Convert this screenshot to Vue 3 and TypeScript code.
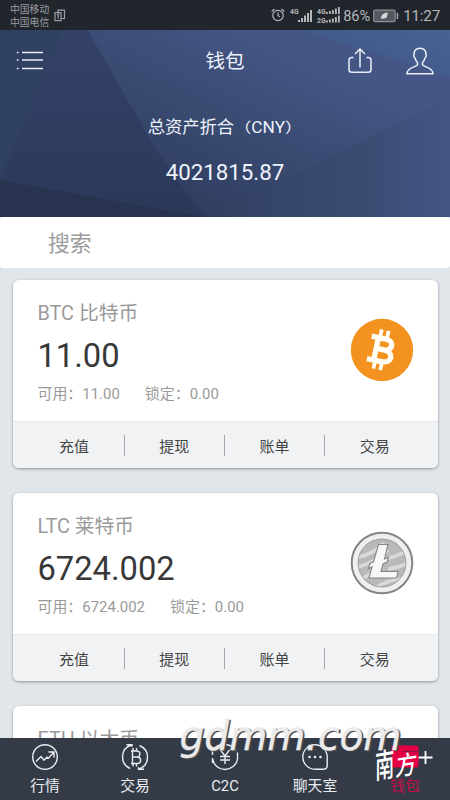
<script setup lang="ts">
interface Coin {
  code: string
  name: string
  total?: string
  available?: string
  locked?: string
}

const coins: Coin[] = [
  { code: 'BTC', name: '比特币', total: '11.00', available: '11.00', locked: '0.00' },
  { code: 'LTC', name: '莱特币', total: '6724.002', available: '6724.002', locked: '0.00' },
  { code: 'ETH', name: '以太币' },
]

const actions: string[] = ['充值', '提现', '账单', '交易']
</script>

<template>
  <div class="screen">
    <div class="status">
      <div class="carriers">
        <span>中国移动</span>
        <span>中国电信</span>
      </div>
      <svg class="sim" width="12" height="13" viewBox="0 0 12 13" fill="none" stroke="#9a9da2" stroke-width="1.2">
        <path d="M1 3.6h6v8H1zM4 3V1.2h6.500V9.500H7.500" />
        <path d="M3 6l1.200-.8v4.500" />
      </svg>
      <div class="spacer"></div>
      <svg class="alarm" width="14" height="14" viewBox="0 0 14 14" fill="none" stroke="#b4b6ba" stroke-width="1.200">
        <circle cx="7" cy="7.500" r="5.200" />
        <path d="M7 4.500v3.200l2 1M.7 3.500L3.500 1M13.300 3.500L10.500 1" />
      </svg>
      <svg class="signals" width="54" height="18" viewBox="0 0 54 18" fill="#b4b6ba">
        <text x="0" y="7.500" class="tiny">4G</text>
        <path d="M8 14h2v2H8zM11 12h2v4h-2zM14 9.500h2V16h-2zM17 7h2v9h-2zM20 4h2v12h-2z" />
        <text x="27" y="8" class="tiny">4G</text>
        <text x="27" y="16.500" class="tiny">2G</text>
        <path d="M36 6h1.800v2H36zM39 5h1.800v3H39zM42 4h1.800v4H42zM45 2.500h1.800V8H45zM48 1h1.800v7H48z" />
        <path d="M36 14.500h1.800v2H36zM39 13.500h1.800v3H39zM42 12.500h1.800v4H42zM45 11h1.800v5.500H45zM48 9.500h1.800v7H48z" />
      </svg>
      <span class="percent">86%</span>
      <svg class="battery" width="26" height="14" viewBox="0 0 26 14" fill="none">
        <rect x=".7" y="1.200" width="21.500" height="11.500" rx="1.500" fill="#54585e" stroke="#8d9096" stroke-width="1.200" />
        <path d="M24.500 4v6" stroke="#a4a6aa" stroke-width="1.500" />
        <path d="M8 10c0-4 2-6 6.500-6.500C15 8 13 10.500 9 9.500z" fill="#d2d4d6" />
      </svg>
      <span class="clock">11:27</span>
    </div>

    <header class="hero">
      <svg class="facets" width="450" height="187" viewBox="0 0 450 187" preserveAspectRatio="none">
        <defs>
          <linearGradient id="base" x1="0" y1="1" x2="1" y2="0">
            <stop offset="0" stop-color="#2a3553" />
            <stop offset=".5" stop-color="#3b4d74" />
            <stop offset="1" stop-color="#476294" />
          </linearGradient>
          <linearGradient id="left" x1="0" y1="0" x2="0" y2="1">
            <stop offset="0" stop-color="#34426a" />
            <stop offset="1" stop-color="#2b3858" />
          </linearGradient>
          <linearGradient id="mid" gradientUnits="userSpaceOnUse" x1="165" y1="187" x2="255" y2="0">
            <stop offset="0" stop-color="#2d3a5c" />
            <stop offset=".5" stop-color="#394a70" />
            <stop offset="1" stop-color="#445685" />
          </linearGradient>
          <linearGradient id="right" x1="0" y1="0" x2="1" y2="0">
            <stop offset="0" stop-color="#303e60" />
            <stop offset=".3" stop-color="#36466a" />
            <stop offset=".65" stop-color="#3b4c72" />
            <stop offset="1" stop-color="#425585" />
          </linearGradient>
        </defs>
        <rect width="450" height="187" fill="url(#base)" />
        <path d="M0 0H64L0 150z" fill="#304061" />
        <path d="M64 0H88L155 118 205 187H0V150z" fill="url(#left)" />
        <path d="M88 0H300L450 47V68L300 142 205 187 155 118z" fill="url(#mid)" />
        <path d="M300 0L450 47V68L435 74 305 0z" fill="#46598a" opacity=".25" />
        <path d="M450 68L300 142 205 187H450z" fill="url(#right)" />
        <path d="M0 150L120 172 205 187H0z" fill="#28334f" />
      </svg>
      <div class="titlebar">
        <svg width="28" height="22" viewBox="0 0 28 22" fill="none" stroke="#e9eef8" stroke-width="1.500">
          <path d="M6 2.500h21M6 10h21M6 18.500h21M.8 2.500h1.800M.8 10h1.800M.8 18.500h1.800" />
        </svg>
        <h1>钱包</h1>
        <div class="tools">
          <svg width="24" height="26" viewBox="0 0 24 26" fill="none" stroke="#e9eef8" stroke-width="1.500">
            <path d="M5.500 9.500H3.800Q1 9.500 1 12.300v9.200Q1 24.300 3.800 24.300h16.400q2.800 0 2.800-2.800v-9.200q0-2.800-2.800-2.800h-1.700M12 19.500V1.500M7 6l5-5 5 5" />
          </svg>
          <svg width="28" height="28" viewBox="0 0 28 28" fill="none" stroke="#e9eef8" stroke-width="1.500">
            <path d="M14 1.200c-4.200 0-6.200 2.800-5.900 6.300-.9 1 .1 3.200 1 3.700.4 2 1.200 3.300 2.400 4.300v2.200C10.500 20.300 1 20 1 26.700h26c0-6.700-9.500-6.400-10.500-9v-2.200c1.200-1 2-2.300 2.400-4.300.9-.5 1.900-2.700 1-3.700.3-3.500-1.700-6.300-5.900-6.300z" />
          </svg>
        </div>
      </div>
      <p class="caption">总资产折合<span class="paren">（</span>CNY<span class="paren">）</span></p>
      <p class="sum">4021815.87</p>
    </header>

    <div class="search">搜索</div>

    <main class="list">
      <section v-for="coin in coins" :key="coin.code" class="card">
        <div class="body">
          <div class="info">
            <h2>{{ coin.code }} {{ coin.name }}</h2>
            <template v-if="coin.total">
              <div class="total">{{ coin.total }}</div>
              <div class="detail">
                <span>可用：{{ coin.available }}</span>
                <span>锁定：{{ coin.locked }}</span>
              </div>
            </template>
          </div>
          <svg v-if="coin.code === 'BTC'" class="logo" viewBox="0 0 64 64">
            <circle cx="32" cy="32" r="31.200" fill="#f4921f" />
            <g transform="rotate(12 32 32)" fill="none" stroke="#fffdf4">
              <path d="M19 20.500H33.500c9.500 0 9.500 11 0 11H27M33.500 31.500c11.500 0 11.500 12 0 12H19M26 20.500V43.500" stroke-width="5.400" />
              <path d="M27.500 12v8M34.500 12v8M27.500 44v8M34.500 44v8" stroke-width="3.800" />
            </g>
          </svg>
          <svg v-else-if="coin.code === 'LTC'" class="logo" viewBox="0 0 64 64">
            <defs>
              <clipPath id="disc"><circle cx="32" cy="32" r="23.500" /></clipPath>
            </defs>
            <circle cx="32" cy="32" r="30.300" fill="#efefef" stroke="#858585" stroke-width="2" />
            <circle cx="32" cy="32" r="23.800" fill="#b9b9b9" stroke="#a4a4a4" stroke-width="1.200" />
            <g clip-path="url(#disc)" fill="none" stroke="#dadada" stroke-width="3.500">
              <path d="M5 27Q22 24 34 12M5 37Q25 32 38 19M33 28Q45 27 60 18M8 49Q22 44 28 36M38 38Q49 37 60 31M22 59Q34 49 59 47" />
            </g>
            <path d="M28.500 13.500h9.500l-3.500 14.500 4-2-1.300 5-4.200 2-2 7.500h17l-1.500 6.500H19l3-11-3.500 1.500 1.300-5 3.700-1.700z" fill="#f7f7f7" stroke="#858585" stroke-width="1.100" />
          </svg>
        </div>
        <div v-if="coin.total" class="actions">
          <button v-for="action in actions" :key="action" type="button">{{ action }}</button>
        </div>
      </section>
    </main>

    <nav class="tabs">
      <div class="tab">
        <svg width="28" height="28" viewBox="0 0 28 28">
          <circle cx="14" cy="14" r="12.300" />
          <path d="M5 18.500l5-5 3 3.800 3-3.200 1.500 1L23 9M17.500 9H23v5.500" />
        </svg>
        <span>行情</span>
      </div>
      <div class="tab">
        <svg width="28" height="28" viewBox="0 0 28 28">
          <path d="M10 1.800H5.500M11 2Q1.500 4.500 1.500 14q0 8 7.500 11.500M6 1.800h5v2M18.500 2.500Q26.500 6 26.500 14q0 9-8.500 12M23 26.200h-5.500v-2" />
          <path d="M10 8h5.500c4.500 0 4.500 6 0 6H11.500M15.500 14c5.500 0 5.500 6.500 0 6.500H10M11.500 8v12.500M12 5v3M15.500 5v3M12 20.500v3M15.500 20.500v3" />
        </svg>
        <span>交易</span>
      </div>
      <div class="tab">
        <svg width="28" height="28" viewBox="0 0 28 28">
          <path d="M1.500 7.500Q5 1.500 14 1.500c5 0 9 3 11 6.500M1.500 7v5M1.800 16.500C3 22.500 8 26.500 14 26.500S25.500 22 26.500 16V9.500M1.500 15v5" />
          <path d="M9.500 7l4.500 6 4.500-6M14 13v8M9 13.500h10M9 17h10" />
        </svg>
        <span>C2C</span>
      </div>
      <div class="tab">
        <svg width="28" height="28" viewBox="0 0 28 28">
          <path d="M14 26.200A12.200 12.200 0 1 1 26.200 14v8.500q0 3.700-3.700 3.700z" />
          <g class="dots"><circle cx="8.500" cy="14" r="1.300" /><circle cx="14" cy="14" r="1.300" /><circle cx="19.500" cy="14" r="1.300" /></g>
        </svg>
        <span>聊天室</span>
      </div>
      <div class="tab active">
        <svg width="28" height="28" viewBox="0 0 28 28">
          <rect x=".5" y="2.500" width="27" height="22" rx="2" class="wallet" />
          <path d="M12 8.500h15" class="slot" />
        </svg>
        <span>钱包</span>
      </div>
    </nav>

    <svg class="stamp" width="450" height="100" viewBox="0 0 450 100">
      <g class="site">
        <text x="181" y="51" textLength="222" lengthAdjust="spacingAndGlyphs" fill="#4b4b4b">gdmm.com</text>
        <text x="179.500" y="49.500" textLength="222" lengthAdjust="spacingAndGlyphs" fill="#ebebeb">gdmm.com</text>
      </g>
      <g class="brush">
        <text transform="translate(375 79) rotate(-10) skewX(-10) scale(.68 1.120)">南</text>
        <text transform="translate(395 76) rotate(-8) skewX(-14) scale(.72 .88)">方</text>
      </g>
      <path d="M425.500 51v13M418.500 57.500h14" stroke="#fff" stroke-width="1.800" />
    </svg>
  </div>
</template>

<style>
body {
  margin: 0;
}
</style>

<style scoped>
.screen {
  position: relative;
  display: flex;
  flex-direction: column;
  width: 450px;
  height: 800px;
  overflow: hidden;
  background: #e1e6eb;
  font-family: Roboto, "Noto Sans CJK SC", sans-serif;
  font-weight: 400;
}

h1, h2, p {
  margin: 0;
  font-weight: 400;
}

.status {
  display: flex;
  align-items: center;
  flex: none;
  box-sizing: border-box;
  height: 30px;
  padding: 0 10px;
  background: #21252c;
  color: #b4b6ba;
}

.carriers {
  display: flex;
  flex-direction: column;
  padding-top: 2px;
  font-size: 9.8px;
  line-height: 13.500px;
  color: #9a9da2;
}

.sim {
  margin-left: 5px;
}

.spacer {
  flex: 1;
}

.alarm {
  margin-right: 5px;
}

.tiny {
  font-size: 6.800px;
  font-weight: 700;
}

.signals {
  margin-right: -1px;
}

.percent {
  width: 28px;
  padding-top: 1px;
  font-size: 14.600px;
  line-height: 30px;
  letter-spacing: -0.1px;
}

.battery {
  margin: 1px 4px 0 2px;
}

.clock {
  padding-top: 1px;
  font-size: 15.200px;
  line-height: 30px;
  letter-spacing: -0.2px;
}

.hero {
  position: relative;
  flex: none;
  height: 187px;
  color: #eef3fb;
  text-align: center;
}

.facets {
  position: absolute;
  inset: 0;
}

.titlebar {
  position: relative;
  display: grid;
  grid-template-columns: 1fr auto 1fr;
  align-items: center;
  height: 60px;
  padding: 1px 16px 0;
}

.titlebar h1 {
  padding-top: 2px;
  font-size: 19.500px;
  line-height: 58px;
}

.tools {
  display: flex;
  justify-content: flex-end;
  align-items: center;
  gap: 34px;
}

.caption {
  position: relative;
  padding-top: 22px;
  font-size: 17.300px;
  line-height: 28px;
}

.caption .paren {
  display: inline-block;
  transform: scaleY(0.82);
}

.sum {
  position: relative;
  padding-top: 16px;
  font-size: 22.300px;
  line-height: 30px;
}

.search {
  flex: none;
  box-sizing: border-box;
  height: 51px;
  padding: 1px 0 0 48px;
  border-radius: 3px;
  background: #fff;
  color: #9c9c9c;
  font-size: 21.800px;
  line-height: 51px;
}

.list {
  display: flex;
  flex: 1;
  flex-direction: column;
  gap: 25px;
  min-height: 0;
  padding: 12px 12.500px 0;
  overflow: hidden;
}

.card {
  flex: none;
  height: 188px;
  overflow: hidden;
  border-radius: 6px;
  background: #fff;
  box-shadow: 0 1px 3px rgba(70, 80, 90, 0.55);
}

.body {
  display: flex;
  justify-content: space-between;
  box-sizing: border-box;
  height: 141px;
  padding: 19px 24px 0 25px;
}

.info {
  white-space: nowrap;
}

.info h2 {
  color: #9a9a9a;
  font-size: 19.800px;
  line-height: 30px;
}

.total {
  color: #383838;
  font-size: 32.700px;
  line-height: 54px;
}

.detail {
  display: flex;
  gap: 25px;
  color: #9a9a9a;
  font-size: 14.950px;
  line-height: 22px;
}

.logo {
  width: 64px;
  height: 64px;
  margin-top: 19px;
}

.actions {
  display: grid;
  grid-template-columns: repeat(4, 1fr);
  align-items: center;
  box-sizing: border-box;
  height: 47px;
  padding: 0 12px;
  border-top: 1px solid #e4e6e8;
  background: #f0f2f4;
}

.actions button {
  height: 21px;
  padding: 2px 0 0;
  border: 0;
  border-right: 1px solid #a5a8ac;
  background: none;
  color: #444;
  font: inherit;
  font-size: 15px;
  line-height: 21px;
}

.actions button:last-child {
  border-right-color: transparent;
}

.tabs {
  display: grid;
  grid-template-columns: repeat(5, 1fr);
  flex: none;
  height: 62px;
  background: #343b47;
}

.tab {
  display: flex;
  flex-direction: column;
  align-items: center;
  padding-top: 5px;
  color: #e9edf2;
  font-size: 14.800px;
  line-height: 28px;
}

.tab svg {
  flex: none;
  fill: none;
  stroke: #e9edf2;
  stroke-width: 1.400;
}

.tab span {
  margin-top: 1px;
}

.tab .dots {
  fill: #e9edf2;
  stroke: none;
}

.tab.active {
  color: #c40d47;
}

.tab .wallet {
  fill: #e50046;
  stroke: none;
}

.tab .slot {
  stroke: #85163e;
}

.stamp {
  position: absolute;
  top: 700px;
  left: 0;
  pointer-events: none;
}

.site {
  font-family: "DejaVu Sans", sans-serif;
  font-size: 40px;
  font-style: italic;
}

.site text {
  stroke: #4b4b4b;
  stroke-width: 0.4;
}

.site text:last-child {
  stroke: #ebebeb;
}

.brush {
  fill: #fff;
  font-family: "Noto Sans CJK SC", sans-serif;
  font-size: 29px;
  font-weight: 500;
}
</style>
